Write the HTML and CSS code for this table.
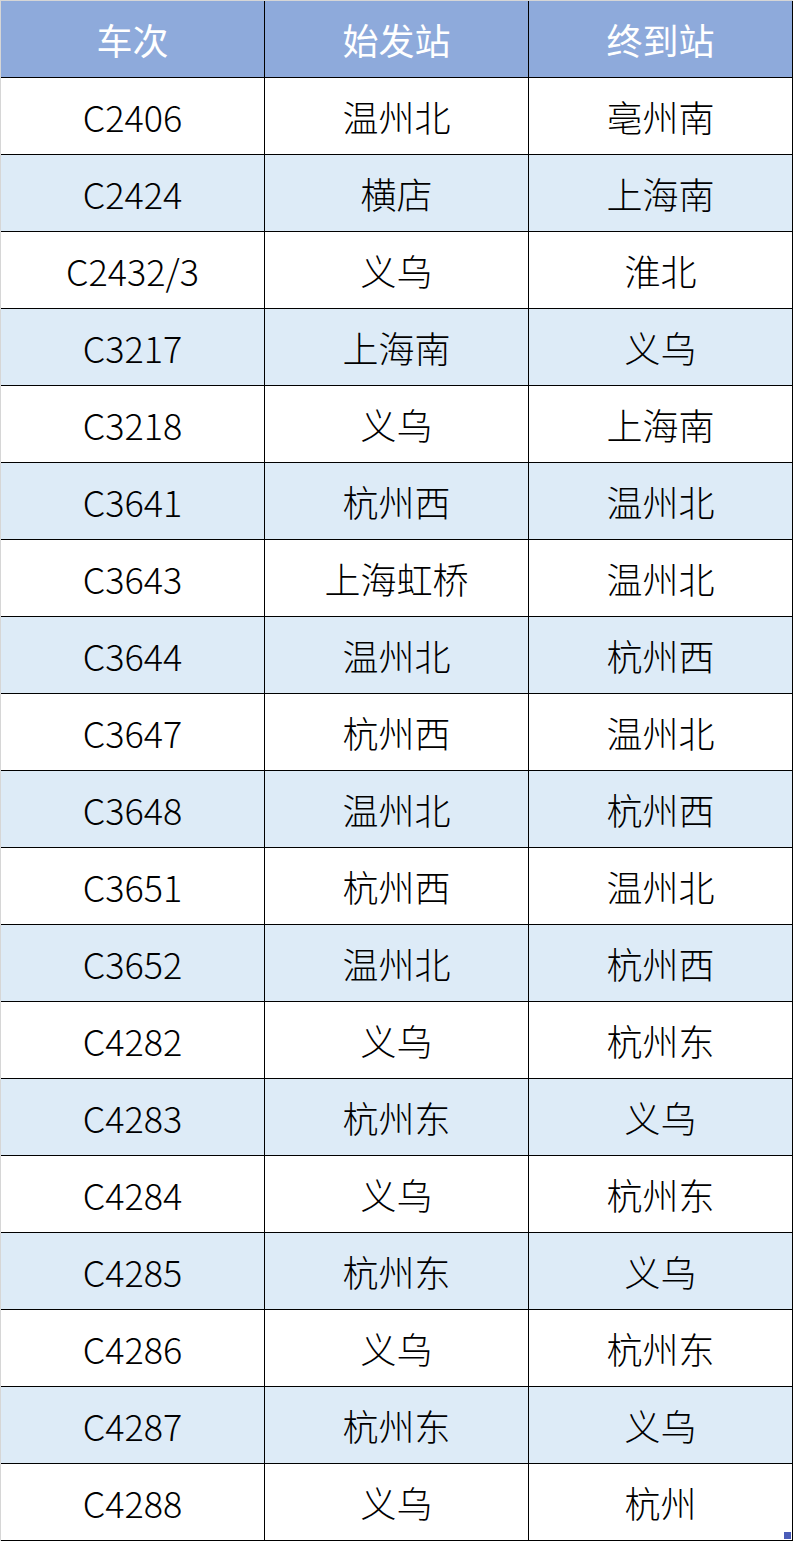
FILE: index.html
```html
<!DOCTYPE html>
<html lang="zh-CN">
<head>
<meta charset="utf-8">
<title>车次</title>
<link rel="stylesheet" href="styles.css">
</head>
<body>
<div class="sheet">
  <div class="cell head">车次</div><div class="cell head">始发站</div><div class="cell head">终到站</div>
  <div class="cell">C2406</div><div class="cell">温州北</div><div class="cell">亳州南</div>
  <div class="cell alt">C2424</div><div class="cell alt">横店</div><div class="cell alt">上海南</div>
  <div class="cell">C2432/3</div><div class="cell">义乌</div><div class="cell">淮北</div>
  <div class="cell alt">C3217</div><div class="cell alt">上海南</div><div class="cell alt">义乌</div>
  <div class="cell">C3218</div><div class="cell">义乌</div><div class="cell">上海南</div>
  <div class="cell alt">C3641</div><div class="cell alt">杭州西</div><div class="cell alt">温州北</div>
  <div class="cell">C3643</div><div class="cell">上海虹桥</div><div class="cell">温州北</div>
  <div class="cell alt">C3644</div><div class="cell alt">温州北</div><div class="cell alt">杭州西</div>
  <div class="cell">C3647</div><div class="cell">杭州西</div><div class="cell">温州北</div>
  <div class="cell alt">C3648</div><div class="cell alt">温州北</div><div class="cell alt">杭州西</div>
  <div class="cell">C3651</div><div class="cell">杭州西</div><div class="cell">温州北</div>
  <div class="cell alt">C3652</div><div class="cell alt">温州北</div><div class="cell alt">杭州西</div>
  <div class="cell">C4282</div><div class="cell">义乌</div><div class="cell">杭州东</div>
  <div class="cell alt">C4283</div><div class="cell alt">杭州东</div><div class="cell alt">义乌</div>
  <div class="cell">C4284</div><div class="cell">义乌</div><div class="cell">杭州东</div>
  <div class="cell alt">C4285</div><div class="cell alt">杭州东</div><div class="cell alt">义乌</div>
  <div class="cell">C4286</div><div class="cell">义乌</div><div class="cell">杭州东</div>
  <div class="cell alt">C4287</div><div class="cell alt">杭州东</div><div class="cell alt">义乌</div>
  <div class="cell">C4288</div><div class="cell">义乌</div><div class="cell">杭州</div>
  <span class="handle"></span>
</div>
</body>
</html>
```
FILE: styles.css
```css
html, body {
  margin: 0;
  padding: 0;
  background: #d6d6d6;
}
body {
  padding: 1px 0 0 1px;
  width: 793px;
  box-sizing: border-box;
  font-family: "Noto Sans CJK SC", "Microsoft YaHei", sans-serif;
}
.sheet {
  position: relative;
  display: grid;
  grid-template-columns: 263px 263px 263px;
  grid-template-rows: 76px;
  grid-auto-rows: 76px;
  gap: 1px;
  padding: 0 1px 1px 0;
  background: #000;
  width: max-content;
}
.cell {
  background: #fff;
  color: #000;
  font-size: 36px;
  font-weight: 300;
  display: flex;
  align-items: center;
  justify-content: center;
  padding-top: 0;
  box-sizing: border-box;
  line-height: 1;
}
.cell.alt {
  background: #ddebf7;
}
.cell.head {
  background: #8eaadb;
  color: #fff;
  font-weight: 400;
}
.handle {
  position: absolute;
  right: 2px;
  bottom: 2px;
  width: 7px;
  height: 7px;
  background: #4a5cb8;
}
```
